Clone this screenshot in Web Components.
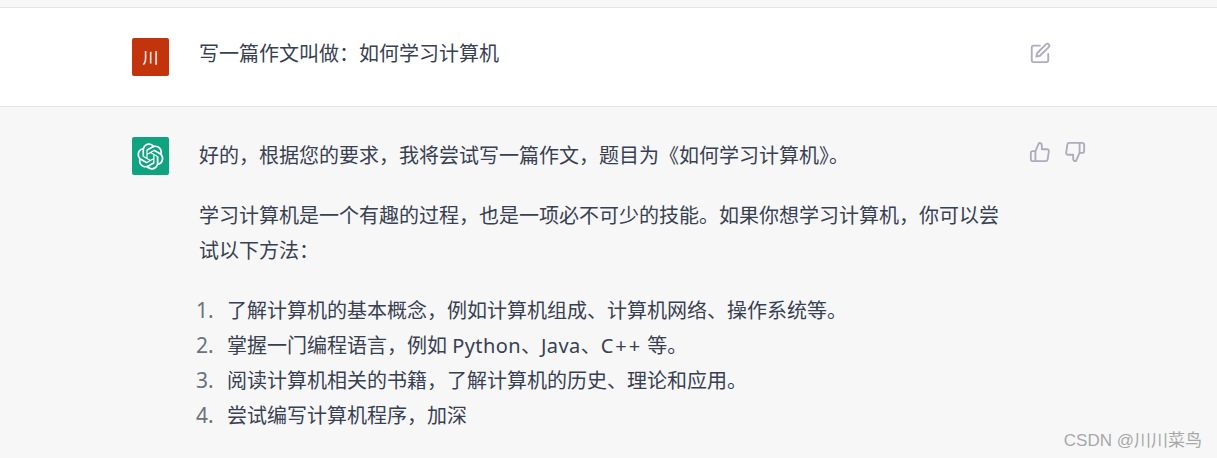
<!DOCTYPE html>
<html lang="zh">
<head>
<meta charset="utf-8">
<title>Chat</title>
<style>
  html, body { margin: 0; height: 458px; overflow: hidden; background: #f7f7f8; }
  body {
    font-family: "Noto Sans", "Noto Sans CJK SC", sans-serif;
    color: #374151;
    font-size: 20px;
    line-height: 35px;
  }
  .latin { letter-spacing: .4px; }
  .plus { letter-spacing: 2px; }
</style>
</head>
<body>
<chat-page>
  <chat-row kind="user" avatar="user" actions="edit">
    <chat-text class="question">写一篇作文叫做&#xFF1A;如何学习计算机</chat-text>
  </chat-row>
  <chat-row kind="bot" avatar="bot" actions="vote">
    <chat-text>好的&#xFF0C;根据您的要求&#xFF0C;我将尝试写一篇作文&#xFF0C;题目为《如何学习计算机》。</chat-text>
    <chat-text>学习计算机是一个有趣的过程&#xFF0C;也是一项必不可少的技能。如果你想学习计算机&#xFF0C;你可以尝试以下方法&#xFF1A;</chat-text>
    <chat-list>
      <chat-item n="1">了解计算机的基本概念&#xFF0C;例如计算机组成、计算机网络、操作系统等。</chat-item>
      <chat-item n="2">掌握一门编程语言&#xFF0C;例如 <span class="latin">Python</span>、<span class="latin">Java</span>、<span class="plus">C++</span> 等。</chat-item>
      <chat-item n="3">阅读计算机相关的书籍&#xFF0C;了解计算机的历史、理论和应用。</chat-item>
      <chat-item n="4">尝试编写计算机程序&#xFF0C;加深</chat-item>
    </chat-list>
  </chat-row>
  <water-mark>CSDN @川川菜鸟</water-mark>
</chat-page>

<script>
const ICONS = {
  edit: `<svg width="22" height="22" viewBox="0 0 24 24"><path d="M12 4H5a2 2 0 0 0-2 2v14a2 2 0 0 0 2 2h14a2 2 0 0 0 2-2v-7"/><path d="M18.5 2.5a2.12 2.12 0 0 1 3 3L12 15l-4 1 1-4 9.5-9.5z"/></svg>`,
  up: `<svg width="22" height="22" viewBox="0 0 24 24"><path d="M14 9V5a3 3 0 0 0-3-3l-4 9v11h11.28a2 2 0 0 0 2-1.7l1.38-9a2 2 0 0 0-2-2.3H14z"/><path d="M7 22H4a2 2 0 0 1-2-2v-7a2 2 0 0 1 2-2h3"/></svg>`,
  down: `<svg width="22" height="22" viewBox="0 0 24 24"><path d="M10 15v4a3 3 0 0 0 3 3l4-9V2H5.72a2 2 0 0 0-2 1.7l-1.38 9a2 2 0 0 0 2 2.3H10z"/><path d="M17 2h2.67A2.31 2.31 0 0 1 22 4v7a2.31 2.31 0 0 1-2.33 2H17"/></svg>`
};

const OPENAI = `M37.5324 16.8707C37.9808 15.5241 38.1363 14.0974 37.9886 12.6859C37.8409 11.2744 37.3934 9.91076 36.676 8.68622C35.6126 6.83404 33.9882 5.3676 32.0373 4.4985C30.0864 3.62941 27.9098 3.40259 25.8215 3.85078C24.8796 2.7893 23.7219 1.94125 22.4257 1.36341C21.1295 0.785575 19.7249 0.491269 18.3058 0.500197C16.1708 0.495044 14.0893 1.16803 12.3614 2.42214C10.6335 3.67624 9.34853 5.44666 8.6917 7.47815C7.30085 7.76286 5.98686 8.3414 4.8377 9.17505C3.68854 10.0087 2.73073 11.0782 2.02839 12.312C0.956464 14.1591 0.498905 16.2988 0.721698 18.4228C0.944492 20.5467 1.83612 22.5449 3.268 24.1293C2.81966 25.4759 2.66413 26.9026 2.81182 28.3141C2.95951 29.7256 3.40701 31.0892 4.12437 32.3138C5.18791 34.1659 6.8123 35.6322 8.76321 36.5013C10.7141 37.3704 12.8907 37.5973 14.9789 37.1492C15.9208 38.2107 17.0786 39.0587 18.3747 39.6366C19.6709 40.2144 21.0755 40.5087 22.4946 40.4998C24.6307 40.5054 26.7133 39.8321 28.4418 38.5772C30.1704 37.3223 31.4556 35.5506 32.1119 33.5179C33.5027 33.2332 34.8167 32.6547 35.9659 31.821C37.115 30.9874 38.0728 29.9178 38.7752 28.684C39.8458 26.8371 40.3023 24.6979 40.0789 22.5748C39.8556 20.4517 38.9639 18.4544 37.5324 16.8707ZM22.4978 37.8849C20.7443 37.8874 19.0459 37.2733 17.6994 36.1501C17.7601 36.117 17.8666 36.0586 17.936 36.0161L25.9004 31.4156C26.1003 31.3019 26.2663 31.137 26.3813 30.9378C26.4964 30.7386 26.5563 30.5124 26.5549 30.2825V19.0542L29.9213 20.998C29.9389 21.0068 29.9541 21.0198 29.9656 21.0359C29.977 21.052 29.9842 21.0707 29.9867 21.0902V30.3889C29.9842 32.375 29.1946 34.2791 27.7909 35.6841C26.3872 37.0892 24.4838 37.8806 22.4978 37.8849ZM6.39227 31.0064C5.51397 29.4888 5.19742 27.7107 5.49804 25.9832C5.55718 26.0187 5.66048 26.0818 5.73461 26.1244L13.699 30.7248C13.8975 30.8408 14.1233 30.902 14.3532 30.902C14.583 30.902 14.8088 30.8408 15.0073 30.7248L24.731 25.1103V28.9979C24.7321 29.0177 24.7283 29.0376 24.7199 29.0556C24.7115 29.0736 24.6988 29.0893 24.6829 29.1012L16.6317 33.7497C14.9096 34.7416 12.8643 35.0097 10.9447 34.4954C9.02506 33.9811 7.38785 32.7263 6.39227 31.0064ZM4.29707 13.6194C5.17156 12.0998 6.55279 10.9364 8.19885 10.3327C8.19885 10.4013 8.19491 10.5228 8.19491 10.6071V19.808C8.19351 20.0378 8.25334 20.2638 8.36823 20.4629C8.48312 20.6619 8.64893 20.8267 8.84863 20.9404L18.5723 26.5542L15.206 28.4979C15.1894 28.5089 15.1703 28.5155 15.1505 28.5173C15.1307 28.5191 15.1107 28.516 15.0924 28.5082L7.04046 23.8557C5.32135 22.8601 4.06716 21.2235 3.55289 19.3046C3.03862 17.3858 3.30624 15.3413 4.29707 13.6194ZM31.955 20.0556L22.2312 14.4411L25.5976 12.4981C25.6142 12.4872 25.6333 12.4805 25.6531 12.4787C25.6729 12.4769 25.6928 12.4801 25.7111 12.4879L33.7631 17.1364C34.9967 17.849 36.0017 18.8982 36.6606 20.1613C37.3194 21.4244 37.6047 22.849 37.4832 24.2684C37.3617 25.6878 36.8382 27.0432 35.9743 28.1759C35.1103 29.3086 33.9415 30.1717 32.6047 30.6641C32.6047 30.5947 32.6047 30.4733 32.6047 30.3889V21.188C32.6066 20.9586 32.5474 20.7328 32.4332 20.5338C32.319 20.3348 32.154 20.1698 31.955 20.0556ZM35.3055 15.0128C35.2464 14.9765 35.1431 14.9142 35.069 14.8717L27.1045 10.2712C26.906 10.1554 26.6803 10.0943 26.4504 10.0943C26.2206 10.0943 25.9948 10.1554 25.7963 10.2712L16.0726 15.8858V11.9982C16.0715 11.9783 16.0753 11.9585 16.0837 11.9405C16.0921 11.9225 16.1048 11.9068 16.1207 11.8949L24.1719 7.25025C25.4053 6.53903 26.8158 6.19376 28.2383 6.25482C29.6608 6.31589 31.0364 6.78077 32.2044 7.59508C33.3723 8.40939 34.2842 9.53945 34.8334 10.8531C35.3826 12.1667 35.5464 13.6095 35.3055 15.0128ZM14.2424 21.9419L10.8752 19.9981C10.8576 19.9893 10.8423 19.9763 10.8309 19.9602C10.8195 19.9441 10.8122 19.9254 10.8098 19.9058V10.6071C10.8107 9.18295 11.2173 7.78848 11.9819 6.58696C12.7466 5.38544 13.8377 4.42659 15.1275 3.82264C16.4173 3.21869 17.8524 2.99464 19.2649 3.1767C20.6775 3.35876 22.0089 3.93941 23.1034 4.85067C23.0427 4.88379 22.937 4.94215 22.8668 4.98473L14.9024 9.58517C14.7025 9.69878 14.5366 9.86356 14.4215 10.0626C14.3065 10.2616 14.2466 10.4877 14.2479 10.7175L14.2424 21.9419ZM16.071 17.9991L20.4018 15.4978L24.7325 17.9975V22.9985L20.4018 25.4983L16.071 22.9985V17.9991Z`;

class ChatPage extends HTMLElement {
  constructor() {
    super();
    this.attachShadow({ mode: 'open' });
    this.shadowRoot.innerHTML = `
      <style>
        :host { display: block; padding-top: 7px; height: 451px; overflow: hidden; }
      </style>
      <slot></slot>`;
  }
}

class ChatRow extends HTMLElement {
  constructor() {
    super();
    this.attachShadow({ mode: 'open' });
  }
  connectedCallback() {
    const isUser = this.getAttribute('kind') === 'user';
    const avatar = isUser
      ? `<div class="avatar user">川</div>`
      : `<div class="avatar bot"><svg width="27" height="27" viewBox="0 0 41 41"><path fill="#fff" d="${OPENAI}"/></svg></div>`;
    const actions = this.getAttribute('actions') === 'edit'
      ? ICONS.edit
      : ICONS.up + ICONS.down;
    this.shadowRoot.innerHTML = `
      <style>
        :host {
          display: flex;
          box-sizing: border-box;
          padding: 30px 0 0 132px;
          border-top: 1px solid #e5e5e6;
          background: ${isUser ? '#fff' : '#f7f7f8'};
          height: ${isUser ? '99px' : 'auto'};
        }
        .avatar {
          flex: none;
          width: 37px;
          height: 38px;
          border-radius: 2px;
          display: flex;
          align-items: center;
          justify-content: center;
          color: #fff;
        }
        .user { background: #c2340b; font-size: 16px; line-height: 1; }
        .bot { background: #10a37f; }
        .body { width: 800px; margin-left: 30px; flex: none; margin-top: ${isUser ? '-2px' : '1px'}; }
        .actions { display: flex; gap: 13px; margin: 4px 0 0 30px; height: 22px; }
        svg { display: block; }
        .actions svg { fill: none; stroke: #acacbe; stroke-width: 2; stroke-linecap: round; stroke-linejoin: round; }
      </style>
      ${avatar}
      <div class="body"><slot></slot></div>
      <div class="actions">${actions}</div>`;
  }
}

class ChatText extends HTMLElement {
  constructor() {
    super();
    this.attachShadow({ mode: 'open' });
    this.shadowRoot.innerHTML = `
      <style>
        :host { display: block; margin-bottom: 25px; }
        :host(.question) { margin-bottom: 0; }
      </style>
      <slot></slot>`;
  }
}

class ChatList extends HTMLElement {
  constructor() {
    super();
    this.attachShadow({ mode: 'open' });
    this.shadowRoot.innerHTML = `
      <style>
        :host { display: block; }
      </style>
      <slot></slot>`;
  }
}

class ChatItem extends HTMLElement {
  constructor() {
    super();
    this.attachShadow({ mode: 'open' });
  }
  connectedCallback() {
    this.shadowRoot.innerHTML = `
      <style>
        :host { display: flex; margin-left: -3px; }
        .n { width: 31px; flex: none; color: #6b7280; font-size: 21px; }
      </style>
      <span class="n">${this.getAttribute('n')}.</span>
      <span><slot></slot></span>`;
  }
}

class WaterMark extends HTMLElement {
  constructor() {
    super();
    this.attachShadow({ mode: 'open' });
    this.shadowRoot.innerHTML = `
      <style>
        :host {
          position: absolute;
          right: 15px;
          top: 430px;
          font-family: "Liberation Sans", "Noto Sans CJK SC", sans-serif;
          font-size: 17px;
          line-height: 22px;
          color: #a8a8a8;
          white-space: nowrap;
        }
      </style>
      <slot></slot>`;
  }
}

customElements.define('chat-page', ChatPage);
customElements.define('chat-row', ChatRow);
customElements.define('chat-text', ChatText);
customElements.define('chat-list', ChatList);
customElements.define('chat-item', ChatItem);
customElements.define('water-mark', WaterMark);
</script>
</body>
</html>
